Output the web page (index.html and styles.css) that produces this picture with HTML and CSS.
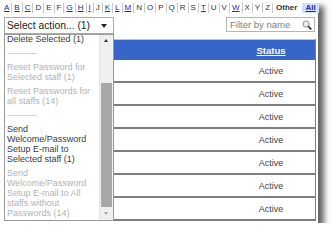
FILE: index.html
```html
<!DOCTYPE html>
<html lang="en">
<head>
    <meta charset="UTF-8">
    <meta name="viewport" content="width=device-width, initial-scale=1.0">
    <title>Staff List</title>
    <link rel="stylesheet" href="styles.css">
</head>
<body>
<div class="frame">
    <div class="letters">
        <a href="#">A</a><a href="#">B</a><a href="#">C</a><span>D</span><span>E</span><span>F</span><a href="#">G</a><a href="#">H</a><a href="#">I</a><span>J</span><a href="#">K</a><a href="#">L</a><a href="#">M</a><span>N</span><span>O</span><span>P</span><span>Q</span><span>R</span><span>S</span><a href="#">T</a><span>U</span><span>V</span><a href="#">W</a><span>X</span><span>Y</span><span>Z</span><span class="other">Other</span><a href="#" class="all">All</a>
    </div>

    <div class="toolbar">
        <div class="action">
            <div class="select">Select action... (1)<span class="caret"></span></div>
            <div class="menu">
                <ul class="options">
                    <li>Delete Selected (1)</li>
                    <li class="off">----------</li>
                    <li class="off">Reset Password for Selected staff (1)</li>
                    <li class="off">Reset Passwords for all staffs (14)</li>
                    <li class="off">----------</li>
                    <li>Send Welcome/Password Setup E-mail to Selected staff (1)</li>
                    <li class="off">Send Welcome/Password Setup E-mail to All staffs without Passwords (14)</li>
                </ul>
                <div class="scrollbar">
                    <div class="sb-up"></div>
                    <div class="thumb"></div>
                    <div class="sb-down"></div>
                </div>
            </div>
        </div>
        <div class="filter">
            <input type="text" placeholder="Filter by name">
            <svg class="search" width="10" height="10" viewBox="0 0 10 10">
                <circle cx="4" cy="4" r="3" fill="#eee" stroke="#9a9a9a" stroke-width="1.2"/>
                <line x1="6.3" y1="6.3" x2="9.3" y2="9.3" stroke="#333" stroke-width="1.8"/>
            </svg>
        </div>
    </div>

    <table class="grid">
        <tr><th></th><th class="status"><a href="#">Status</a></th></tr>
        <tr><td></td><td class="status">Active</td></tr>
        <tr><td></td><td class="status">Active</td></tr>
        <tr><td></td><td class="status">Active</td></tr>
        <tr><td></td><td class="status">Active</td></tr>
        <tr><td></td><td class="status">Active</td></tr>
        <tr><td></td><td class="status">Active</td></tr>
        <tr><td></td><td class="status">Active</td></tr>
    </table>
</div>
</body>
</html>
```

FILE: styles.css
```css
body { margin: 0; background: #fff; font-family: "Liberation Sans", Arial, sans-serif; }
.frame { width: 318px; height: 223px; box-sizing: border-box; padding: 0 2px 0 4px; background: #fff; box-shadow: 6px 6px 6px rgba(0,0,0,0.62); }

.letters { display: flex; margin-left: -2px; padding-top: 3px; height: 10px; font-size: 8px; line-height: 10px; }
.letters a, .letters span { padding: 0 2px; border-left: 1px solid #c8c8c8; color: #333; text-decoration: none; }
.letters a { color: #2424b8; text-decoration: underline; }
.letters :first-child { border-left: none; }
.letters .other { font-weight: bold; padding: 0 4px 0 3px; }
.letters .all { font-weight: bold; border-left: none; background: #cfe0fb; padding: 0 3px; margin-left: 1px; }

.toolbar { display: flex; justify-content: space-between; margin-top: 4px; height: 17px; }
.action { position: relative; }
.select { position: relative; width: 110px; height: 17px; box-sizing: border-box; border: 1px solid #a9a9a9; padding-left: 2px; font-size: 10.3px; line-height: 15px; color: #222; }
.caret { position: absolute; right: 6px; top: 6px; border-left: 3.5px solid transparent; border-right: 3.5px solid transparent; border-top: 4px solid #222; }

.menu { position: absolute; left: 0; top: 17px; width: 110px; height: 187px; box-sizing: border-box; border: 1px solid #9a9a9a; background: #fff; overflow: hidden; z-index: 2; }
.options { list-style: none; margin: -3px 0 0; padding: 0 14px 0 2px; font-size: 9px; line-height: 10px; color: #3b3b3b; }
.options li { padding: 2px 0; }
.options .off { color: #b3b3b3; }
.scrollbar { position: absolute; top: 0; right: 0; bottom: 0; width: 13px; background: #f0f0f0; border-left: 1px solid #e2e2e2; }
.sb-up, .sb-down { position: absolute; left: 0; right: 0; height: 13px; }
.sb-up { top: 0; }
.sb-down { bottom: 0; }
.sb-up::after, .sb-down::after { content: ""; position: absolute; left: 4px; border-left: 2.5px solid transparent; border-right: 2.5px solid transparent; }
.sb-up::after { top: 4px; border-bottom: 3px solid #333; }
.sb-down::after { bottom: 5px; border-top: 3px solid #a0a0a0; }
.thumb { position: absolute; left: 1px; right: 1px; bottom: 13px; height: 124px; background: #a8a8a8; }

.filter { position: relative; width: 89px; height: 15px; margin: 0 1px 0 0; box-sizing: border-box; border: 1px solid #b5b5b5; }
.filter input { display: block; width: 100%; height: 13px; box-sizing: border-box; border: none; padding: 0 0 0 3px; font-family: "Liberation Sans", Arial, sans-serif; font-size: 9.5px; line-height: 13px; color: #333; outline: none; background: transparent; }
.filter input::placeholder { color: #808080; }
.search { position: absolute; right: 2px; top: 1.5px; }

.grid { width: 100%; margin-top: 5px; border-collapse: collapse; border-top: 1px solid #b4c2ef; border-left: 1px solid #5a80d8; border-right: 1px solid #5a80d8; }
.grid th { height: 20px; padding: 0; background: #3765c8; color: #fff; font-size: 9.5px; font-weight: bold; }
.grid th a { color: #fff; }
.grid td { height: 21px; padding: 0; border-bottom: 2px solid #7f7f7f; font-size: 9px; color: #444; }
.grid .status { width: 88px; text-align: center; }
```
